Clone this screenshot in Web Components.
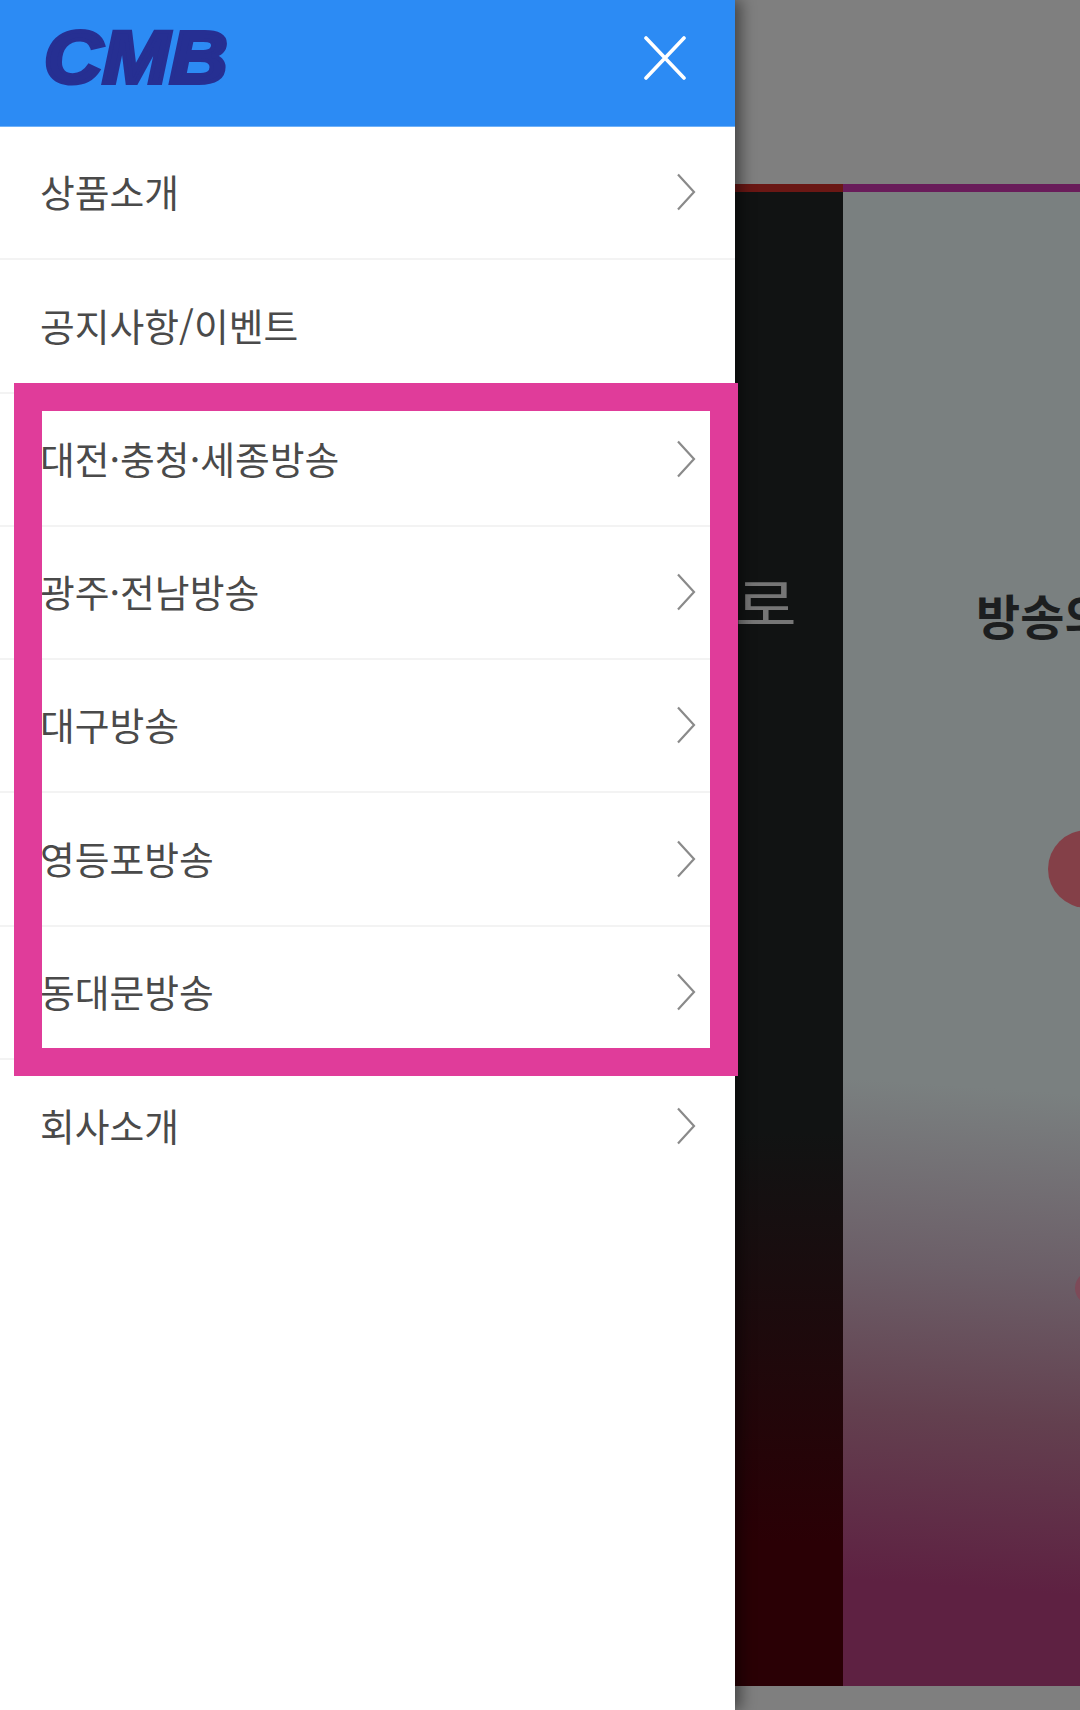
<!DOCTYPE html>
<html lang="ko">
<head>
<meta charset="utf-8">
<title>CMB</title>
<style>
  html, body { margin: 0; padding: 0; background: #7f7f7f; }
  body { width: 1080px; height: 1710px; overflow: hidden; font-family: "Noto Sans CJK KR", "Noto Sans", sans-serif; }
</style>
</head>
<body>
<app-screen>
  <side-drawer slot="drawer">
    <drawer-header></drawer-header>
    <menu-row>상품소개</menu-row>
    <menu-row nochevron>공지사항/이벤트</menu-row>
    <menu-row>대전·충청·세종방송</menu-row>
    <menu-row>광주·전남방송</menu-row>
    <menu-row>대구방송</menu-row>
    <menu-row>영등포방송</menu-row>
    <menu-row>동대문방송</menu-row>
    <menu-row noline>회사소개</menu-row>
  </side-drawer>
  <page-behind slot="page"></page-behind>
  <highlight-frame slot="overlay"></highlight-frame>
</app-screen>

<script>
class AppScreen extends HTMLElement {
  constructor() {
    super();
    this.attachShadow({mode: "open"}).innerHTML = `
    <style>
      :host { display: flex; position: relative; width: 1080px; height: 1710px; overflow: hidden; }
      ::slotted([slot=drawer]) { flex: 0 0 735px; }
      ::slotted([slot=page]) { flex: 1 1 0; }
    </style>
    <slot name="drawer"></slot>
    <slot name="page"></slot>
    <slot name="overlay"></slot>`;
  }
}

class SideDrawer extends HTMLElement {
  constructor() {
    super();
    this.attachShadow({mode: "open"}).innerHTML = `
    <style>
      :host {
        display: flex; flex-direction: column;
        position: relative; z-index: 2;
        height: 1710px; background: #fff;
        box-shadow: 6px 0 14px rgba(0,0,0,.45);
      }
    </style>
    <slot></slot>`;
  }
}

class DrawerHeader extends HTMLElement {
  constructor() {
    super();
    this.attachShadow({mode: "open"}).innerHTML = `
    <style>
      :host {
        display: flex; align-items: center; justify-content: space-between;
        box-sizing: border-box; height: 127px; flex: none;
        padding: 0 48px 11px 44px;
        background: #2c8bf4; border-bottom: 1px solid #6fb1f8;
      }
      .logo {
        font: italic 700 74px/1 "Liberation Sans", sans-serif;
        color: #262f92; -webkit-text-stroke: 4px #262f92;
        transform: scaleX(1.09); transform-origin: left center;
      }
      svg { display: block; }
    </style>
    <span class="logo">CMB</span>
    <svg width="44" height="44" viewBox="0 0 44 44" fill="none" stroke="#fff" stroke-width="3.6" stroke-linecap="round">
      <path d="M3 2 L41 42 M41 2 L3 42"/>
    </svg>`;
  }
}

class MenuRow extends HTMLElement {
  constructor() {
    super();
    this.attachShadow({mode: "open"}).innerHTML = `
    <style>
      :host {
        display: flex; align-items: center; justify-content: space-between;
        box-sizing: border-box; height: 133.3px; flex: none;
        padding: 0 39px 0 40px;
        border-bottom: 2px solid #f3f3f3;
        font-size: 37.8px; line-height: 1; color: #4a4a4a; font-weight: 400;
      }
      :host([noline]) { border-bottom: 0; }
      :host([nochevron]) svg { display: none; }
      .label { padding-bottom: 3px; }
      svg { display: block; flex: none; margin-bottom: 1px; }
    </style>
    <span class="label"><slot></slot></span>
    <svg width="20" height="38" viewBox="0 0 20 38" fill="none" stroke="#8a8a8a" stroke-width="2.2">
      <path d="M2 1.5 L18 19 L2 36.5"/>
    </svg>`;
  }
}

class PageBehind extends HTMLElement {
  constructor() {
    super();
    this.attachShadow({mode: "open"}).innerHTML = `
    <style>
      :host {
        display: grid; height: 1710px;
        grid-template-columns: 108px 1fr;
        grid-template-rows: 184px 8px 1fr 24px;
        background: #7f7f7f; overflow: hidden;
      }
      .top, .bottom { grid-column: 1 / 3; background: #7f7f7f; }
      .red { background: #6a1714; }
      .purple { background: #691c5a; }
      .dark {
        background: linear-gradient(#111313 0, #111313 940px, #2a0005 1350px, #2a0005 100%);
        font-size: 56px; font-weight: 400; color: #767676;
        padding: 381px 0 0 0; margin: 0; line-height: 1;
        white-space: nowrap;
      }
      .dark span { display: block; margin-left: 0; transform: scaleX(1.2); transform-origin: left; }
      .light {
        position: relative; overflow: hidden;
        background: linear-gradient(184deg, #7a8080 0, #7a8080 900px, #6c5f68 1080px, #63404f 1230px, #5e2142 1400px);
      }
      .light b {
        display: block; margin: 398px 0 0 133px;
        font-size: 48px; line-height: 1; font-weight: 700; color: #1c1e1f; white-space: nowrap;
      }
      .dot { position: absolute; border-radius: 50%; background: #844048; }
      .dot.a { left: 205px; top: 638px; width: 78px; height: 78px; }
      .dot.b { left: 232px; top: 1078px; width: 40px; height: 36px; background: #7d4a58; }
    </style>
    <div class="top"></div>
    <div class="red"></div>
    <div class="purple"></div>
    <div class="dark"><span>로</span></div>
    <div class="light"><b>방송의</b><i class="dot a"></i><i class="dot b"></i></div>
    <div class="bottom"></div>`;
  }
}

class HighlightFrame extends HTMLElement {
  constructor() {
    super();
    this.attachShadow({mode: "open"}).innerHTML = `
    <style>
      :host {
        display: block; position: absolute; z-index: 3;
        left: 13.5px; top: 383px; width: 724.5px; height: 693px;
        box-sizing: border-box; border: 28px solid #e03c9a;
      }
    </style>`;
  }
}

customElements.define("app-screen", AppScreen);
customElements.define("side-drawer", SideDrawer);
customElements.define("drawer-header", DrawerHeader);
customElements.define("menu-row", MenuRow);
customElements.define("page-behind", PageBehind);
customElements.define("highlight-frame", HighlightFrame);
</script>
</body>
</html>
